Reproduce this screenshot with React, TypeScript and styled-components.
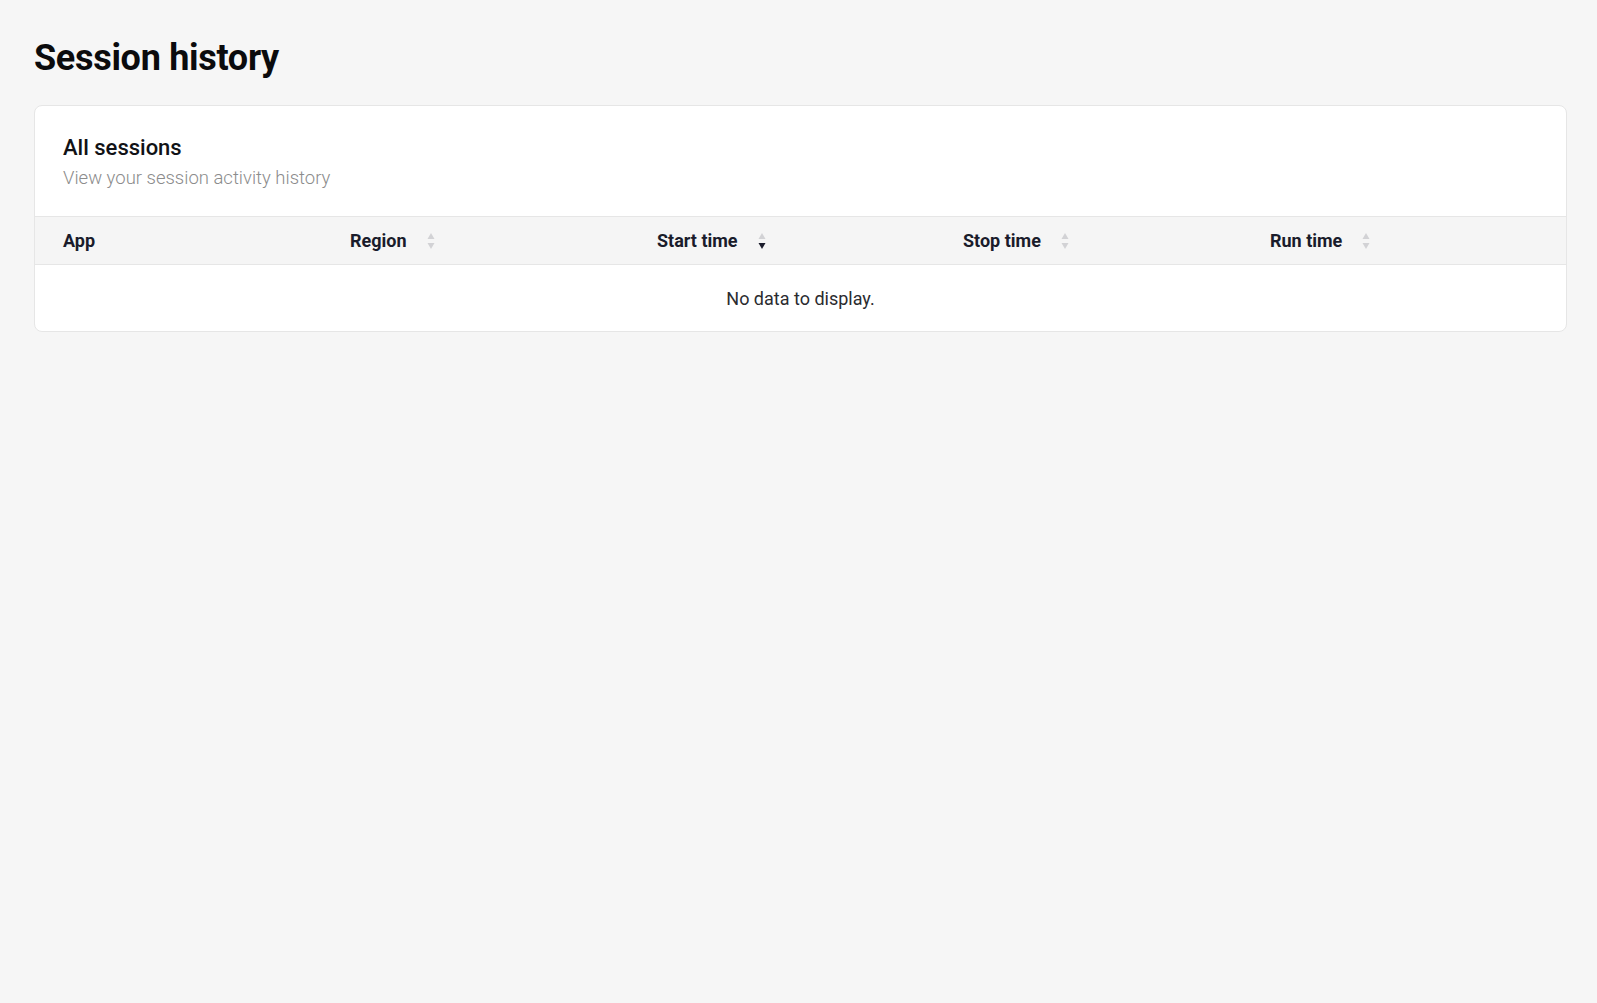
import styled, { createGlobalStyle } from "styled-components"

const GlobalStyle = createGlobalStyle`
    html, body {
        margin: 0;
        padding: 0;
        background: #f6f6f6;
        font-family: Roboto, "Noto Sans", sans-serif;
        color: #1a1c2b;
    }
`

type Sort = "none" | "asc" | "desc"

const columns: { label: string; sort?: Sort }[] = [
    { label: "App" },
    { label: "Region", sort: "none" },
    { label: "Start time", sort: "desc" },
    { label: "Stop time", sort: "none" },
    { label: "Run time", sort: "none" },
]

function SortIcon({ sort }: { sort: Sort }) {
    return (
        <StyledSort>
            <svg width="8" height="22" viewBox="0 0 8 22">
                <path d="M4 3 L7.5 9 L0.5 9 Z" fill={sort === "asc" ? "#1a1c2b" : "#d2d2d5"} />
                <path d="M4 19 L7.5 13 L0.5 13 Z" fill={sort === "desc" ? "#1a1c2b" : "#d2d2d5"} />
            </svg>
        </StyledSort>
    )
}

export default function App() {
    return (
        <>
            <GlobalStyle />
            <StyledPage>
                <h1>Session history</h1>

                <StyledCard>
                    <div className="card-head">
                        <h2>All sessions</h2>
                        <p>View your session activity history</p>
                    </div>

                    <StyledHeadRow>
                        {columns.map((c) => (
                            <div className="cell" key={c.label}>
                                <span>{c.label}</span>
                                {c.sort && <SortIcon sort={c.sort} />}
                            </div>
                        ))}
                    </StyledHeadRow>

                    <StyledEmpty>No data to display.</StyledEmpty>
                </StyledCard>
            </StyledPage>
        </>
    )
}

const StyledPage = styled.main`
    padding: 36px 30px 0 34px;

    h1 {
        margin: 0 0 25px;
        font-size: 36px;
        line-height: 44px;
        font-weight: 700;
        color: #0b0b0d;
        letter-spacing: -0.3px;
    }
`

const StyledCard = styled.section`
    background: #fff;
    border: 1px solid #e6e6e6;
    border-radius: 8px;
    overflow: hidden;

    .card-head {
        padding: 27px 28px 26px;
    }

    h2 {
        margin: 0;
        font-size: 22px;
        line-height: 30px;
        font-weight: 500;
        color: #111216;
    }

    p {
        margin: 3px 0 0;
        font-size: 18.5px;
        line-height: 24px;
        font-weight: 300;
        color: #8c8c8c;
    }
`

const StyledHeadRow = styled.div`
    display: grid;
    grid-template-columns: 287px 307px 306px 307px 1fr;
    align-items: center;
    height: 47px;
    padding-left: 28px;
    background: #f5f5f5;
    border-top: 1px solid #e6e6e6;
    border-bottom: 1px solid #e6e6e6;

    .cell {
        display: flex;
        align-items: center;
        font-size: 18px;
        font-weight: 700;
        color: #1a1c2b;
    }
`

const StyledSort = styled.span`
    display: inline-flex;
    margin-left: 20px;
`

const StyledEmpty = styled.div`
    display: flex;
    align-items: center;
    justify-content: center;
    height: 66px;
    padding-top: 1px;
    box-sizing: border-box;
    font-size: 18px;
    color: #2b2b2f;
`
